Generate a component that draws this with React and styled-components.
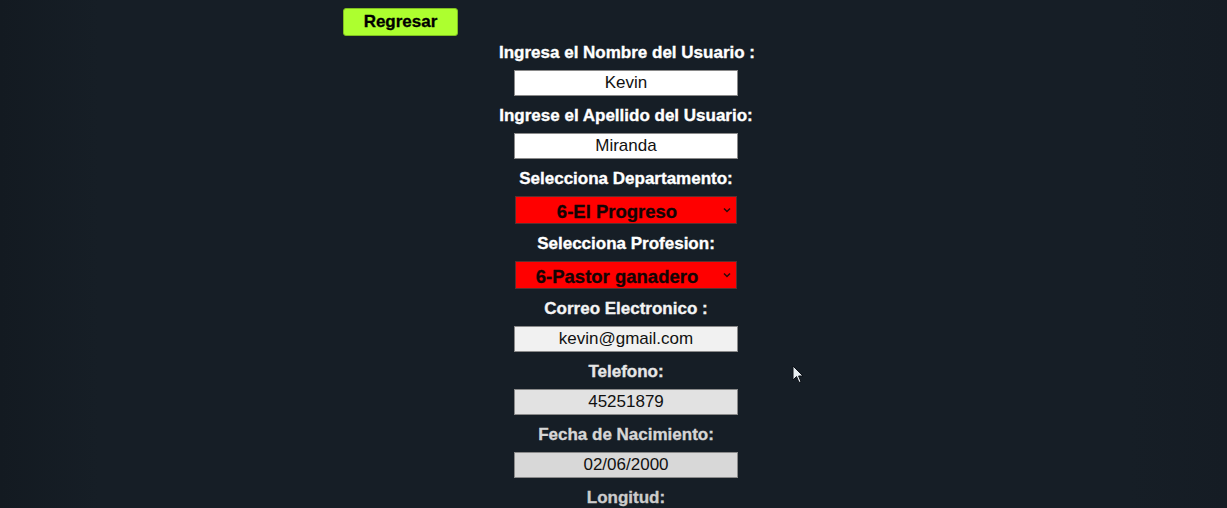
import React from 'react'
import styled, { createGlobalStyle } from 'styled-components'

const GlobalStyle = createGlobalStyle`
  html, body {
    margin: 0;
    padding: 0;
    background: #151d25;
    font-family: "Liberation Sans", Arial, sans-serif;
  }
`

const Page = styled.div`
  position: relative;
  min-height: 508px;
  background: linear-gradient(90deg, #131a21 0%, #161e26 8%, #161e26 92%, #151c24 100%);
  padding-top: 8px;
  box-sizing: border-box;
  overflow: hidden;
`

const Container = styled.div`
  width: 566px;
  margin-left: 343px;
  display: flex;
  flex-direction: column;
`

const BackButton = styled.button`
  align-self: flex-start;
  width: 115px;
  height: 28px;
  background: #adff2f;
  border: 1px solid #7fbf20;
  border-radius: 3px;
  font-family: "Liberation Sans", Arial, sans-serif;
  font-weight: bold;
  font-size: 17px;
  -webkit-text-stroke: 0.3px #000;
  color: #000;
  cursor: pointer;
  margin-bottom: 8px;
  padding: 0;
`

const Form = styled.form`
  display: flex;
  flex-direction: column;
  align-items: center;
`

const Field = styled.div`
  display: flex;
  flex-direction: column;
  align-items: center;
  margin-bottom: 11px;
`

const Label = styled.label`
  font-weight: bold;
  font-size: 17px;
  line-height: 18px;
  white-space: nowrap;
  color: ${p => p.$tone || '#ffffff'};
  -webkit-text-stroke: 0.35px ${p => p.$tone || '#ffffff'};
  margin-bottom: 8px;
  padding-left: ${p => p.$shift || 0}px;
`

const Input = styled.input`
  width: 224px;
  height: 26px;
  box-sizing: border-box;
  border: 1px solid #8a8a8a;
  background: ${p => p.$bg || '#ffffff'};
  text-align: center;
  font-family: "Liberation Sans", Arial, sans-serif;
  font-size: 17px;
  color: #111;
  padding: 0 4px;
  outline: none;
`

const SelectWrap = styled.div`
  position: relative;
  width: 222px;
  height: 28px;
`

const Select = styled.select`
  appearance: none;
  -webkit-appearance: none;
  width: 100%;
  height: 100%;
  box-sizing: border-box;
  background: #ff0000;
  border: 1px solid #5a3030;
  font-family: "Liberation Sans", Arial, sans-serif;
  font-weight: bold;
  font-size: 18.5px;
  color: #140404;
  -webkit-text-stroke: 0.3px #140404;
  text-align-last: center;
  padding: 2px 22px 0 4px;
  outline: none;
`

const Chevron = styled.svg`
  position: absolute;
  right: 6px;
  top: 11px;
  width: 8px;
  height: 6px;
  pointer-events: none;
`

const Cursor = styled.svg`
  position: absolute;
  left: 792px;
  top: 365px;
  width: 12px;
  height: 19px;
`

const Arrow = () => (
  <Chevron viewBox="0 0 8 6">
    <path d="M1 1.5 L4 4.5 L7 1.5" fill="none" stroke="#2a0a0a" strokeWidth="1.5" />
  </Chevron>
)

const TextField = ({ label, value, bg, tone, shift }) => (
  <Field>
    <Label $tone={tone} $shift={shift}>{label}</Label>
    <Input value={value} readOnly $bg={bg} />
  </Field>
)

const SelectField = ({ label, value }) => (
  <Field>
    <Label>{label}</Label>
    <SelectWrap>
      <Select value={value} onChange={() => {}}>
        <option value={value}>{value}</option>
      </Select>
      <Arrow />
    </SelectWrap>
  </Field>
)

export default function App() {
  return (
    <>
      <GlobalStyle />
      <Page>
        <Container>
          <BackButton type="button">Regresar</BackButton>
          <Form>
            <TextField label="Ingresa el Nombre del Usuario :" value="Kevin" shift={2} />
            <TextField label="Ingrese el Apellido del Usuario:" value="Miranda" />
            <SelectField label="Selecciona Departamento:" value="6-El Progreso" />
            <SelectField label="Selecciona Profesion:" value="6-Pastor ganadero" />
            <TextField label="Correo Electronico :" value="kevin@gmail.com" bg="#f1f1f1" tone="#f4f4f4" />
            <TextField label="Telefono:" value="45251879" bg="#e2e2e2" tone="#e6e6e6" />
            <TextField label="Fecha de Nacimiento:" value="02/06/2000" bg="#d8d8d8" tone="#d6d6d6" />
            <Field>
              <Label $tone="#cccccc">Longitud:</Label>
            </Field>
          </Form>
        </Container>
        <Cursor viewBox="0 0 12 19">
          <path d="M1 1 L1 15 L4.5 11.5 L7 17.5 L9 16.7 L6.6 11 L11 11 Z" fill="#e8eef2" stroke="#0d1117" strokeWidth="1" />
        </Cursor>
      </Page>
    </>
  )
}
